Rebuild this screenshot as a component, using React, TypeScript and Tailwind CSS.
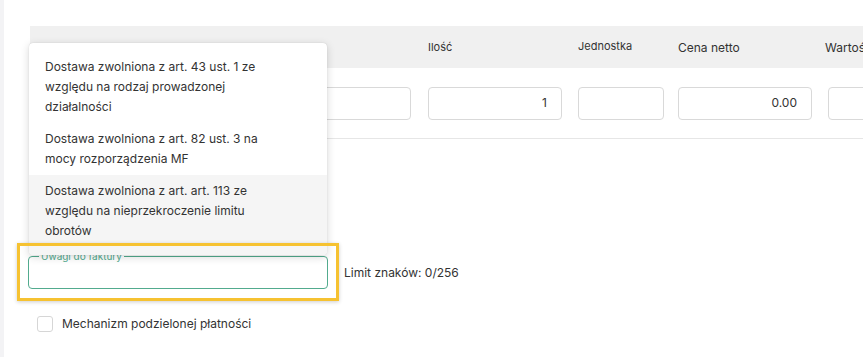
import React from "react";

const font = { fontFamily: "Inter, 'Noto Sans', sans-serif" };

export default function App() {
  return (
    <div
      className="relative flex h-[357px] w-[863px] overflow-hidden bg-white text-[#333333]"
      style={font}
    >
      <div className="w-[4px] shrink-0 bg-[#f3f3f5]" />
      <div className="flex min-w-0 flex-1 flex-col pl-[24px] pt-[26px]">
        <div className="ml-[2px] flex flex-col">
          <div className="flex h-[42px] items-center bg-[#f0f0f0] pl-[10px] text-[11px] leading-none">
            <div className="w-[50px] shrink-0 pt-[1px] text-[12px]">Lp.</div>
            <div className="w-[338px] shrink-0 pt-[1px] text-[12px]">Nazwa</div>
            <div className="w-[150px] shrink-0 pt-[1px]">Ilość</div>
            <div className="w-[100px] shrink-0 -mt-[1px]">Jednostka</div>
            <div className="w-[150px] shrink-0 pt-[1px] text-[12px]">Cena netto</div>
            <div className="w-[150px] shrink-0 -ml-[3px] pt-[1px] text-[12px]">Wartość</div>
          </div>
          <div className="flex h-[71px] items-center border-b border-[#e6e6e6] pl-[10px] text-[12px]">
            <div className="w-[50px] shrink-0" />
            <div className="w-[338px] shrink-0">
              <div className="ml-[110px] h-[33px] w-[211px] rounded-[4px] border border-[#d9d9d9]" />
            </div>
            <div className="w-[150px] shrink-0">
              <div className="flex h-[33px] w-[134px] items-center justify-end rounded-[4px] border border-[#d9d9d9] pr-[14px]">1</div>
            </div>
            <div className="w-[100px] shrink-0">
              <div className="h-[33px] w-[86px] rounded-[4px] border border-[#d9d9d9]" />
            </div>
            <div className="w-[150px] shrink-0">
              <div className="flex h-[33px] w-[134px] items-center justify-end rounded-[4px] border border-[#d9d9d9] pr-[14px]">0.00</div>
            </div>
            <div className="w-[150px] shrink-0">
              <div className="h-[33px] w-[134px] rounded-[4px] border border-[#d9d9d9]" />
            </div>
          </div>
        </div>

        <div className="mt-[117px] flex items-center gap-[16px]">
          <div className="relative h-[33px] w-[300px] rounded-[4px] border border-[#52ab8e]">
            <span className="absolute left-[10px] top-[-7px] bg-white px-[2px] text-[10px] leading-[12px] text-[#52ab8e]">
              Uwagi do faktury
            </span>
          </div>
          <span className="text-[12px]">Limit znaków: 0/256</span>
        </div>

        <div className="mt-[26px] ml-[9px] flex items-center gap-[9px]">
          <div className="h-[16px] w-[16px] rounded-[3px] border border-[#d6d6d6] bg-white" />
          <span className="text-[12px]">Mechanizm podzielonej płatności</span>
        </div>
      </div>

      {/* dropdown menu overlay */}
      <div className="absolute left-[29px] top-[43px] w-[298px] overflow-hidden rounded-[4px] bg-white pt-[8px] text-[12px] leading-[20px] shadow-[0_2px_8px_rgba(0,0,0,0.16),0_0_1px_rgba(0,0,0,0.2)]">
        <div className="px-[16px] py-[6px]">
          <div>Dostawa zwolniona z art. 43 ust. 1 ze</div>
          <div>względu na rodzaj prowadzonej</div>
          <div>działalności</div>
        </div>
        <div className="px-[16px] py-[6px]">
          <div>Dostawa zwolniona z art. 82 ust. 3 na</div>
          <div>mocy rozporządzenia MF</div>
        </div>
        <div className="bg-[#f5f5f5] px-[16px] pb-[14px] pt-[6px]">
          <div>Dostawa zwolniona z art. art. 113 ze</div>
          <div>względu na nieprzekroczenie limitu</div>
          <div>obrotów</div>
        </div>
      </div>

      {/* highlight annotation */}
      <div className="absolute left-[17px] top-[243px] h-[58px] w-[322px] border-[3px] border-[#f6c231] shadow-[0_1px_4px_rgba(0,0,0,0.2)]" />
    </div>
  );
}
